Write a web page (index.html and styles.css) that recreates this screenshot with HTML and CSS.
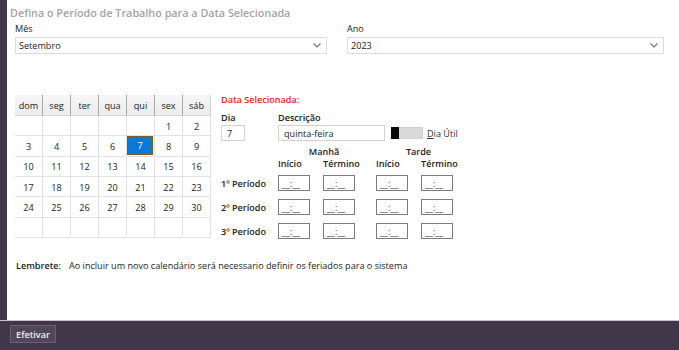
FILE: index.html
```html
<!DOCTYPE html>
<html lang="pt">
<head>
<meta charset="utf-8">
<link rel="stylesheet" href="styles.css">
</head>
<body>
<div class="app">
  <div class="panel">
    <h1 class="title">Defina o Período de Trabalho para a Data Selecionada</h1>
    <div class="selects">
      <div class="field">
        <div class="lbl">Mês</div>
        <div class="select"><span>Setembro</span><svg class="chev" width="8" height="5" viewBox="0 0 8 5"><polyline points="0.5,0.5 4,4 7.5,0.5" fill="none" stroke="#777" stroke-width="1.2"/></svg></div>
      </div>
      <div class="field">
        <div class="lbl">Ano</div>
        <div class="select"><span>2023</span><svg class="chev" width="8" height="5" viewBox="0 0 8 5"><polyline points="0.5,0.5 4,4 7.5,0.5" fill="none" stroke="#777" stroke-width="1.2"/></svg></div>
      </div>
    </div>
    <div class="content">
      <div class="calendar">
        <div class="hd">dom</div><div class="hd">seg</div><div class="hd">ter</div><div class="hd">qua</div><div class="hd">qui</div><div class="hd">sex</div><div class="hd">sáb</div>
        <div class="cd"></div><div class="cd"></div><div class="cd"></div><div class="cd"></div><div class="cd"></div><div class="cd">1</div><div class="cd">2</div>
        <div class="cd">3</div><div class="cd">4</div><div class="cd">5</div><div class="cd">6</div><div class="cd"><span class="sel">7</span></div><div class="cd">8</div><div class="cd">9</div>
        <div class="cd">10</div><div class="cd">11</div><div class="cd">12</div><div class="cd">13</div><div class="cd">14</div><div class="cd">15</div><div class="cd">16</div>
        <div class="cd">17</div><div class="cd">18</div><div class="cd">19</div><div class="cd">20</div><div class="cd">21</div><div class="cd">22</div><div class="cd">23</div>
        <div class="cd">24</div><div class="cd">25</div><div class="cd">26</div><div class="cd">27</div><div class="cd">28</div><div class="cd">29</div><div class="cd">30</div>
        <div class="cd"></div><div class="cd"></div><div class="cd"></div><div class="cd"></div><div class="cd"></div><div class="cd"></div><div class="cd"></div>
      </div>
      <div class="form">
        <div class="sel-title">Data Selecionada:</div>
        <div class="day-row">
          <div class="col-dia">
            <div class="flbl">Dia</div>
            <div class="input dia">7</div>
          </div>
          <div class="col-desc">
            <div class="flbl">Descrição</div>
            <div class="desc-line">
              <div class="input desc">quinta-feira</div>
              <div class="toggle"><span class="thumb"></span></div>
              <span class="util"><u>D</u>ia Útil</span>
            </div>
          </div>
        </div>
        <div class="periods">
          <div></div><div class="grp g1">Manhã</div><div class="grp g2">Tarde</div>
          <div></div><div class="flbl">Início</div><div class="flbl">Término</div><div class="flbl">Início</div><div class="flbl">Término</div>
          <div class="plbl">1º Período</div><div class="time">__:__</div><div class="time">__:__</div><div class="time">__:__</div><div class="time">__:__</div>
          <div class="plbl">2º Período</div><div class="time">__:__</div><div class="time">__:__</div><div class="time">__:__</div><div class="time">__:__</div>
          <div class="plbl">3º Período</div><div class="time">__:__</div><div class="time">__:__</div><div class="time">__:__</div><div class="time">__:__</div>
        </div>
      </div>
    </div>
    <div class="reminder"><b>Lembrete:</b><span>Ao incluir um novo calendário será necessario definir os feriados para o sistema</span></div>
  </div>
  <div class="footer"><button class="btn">Efetivar</button></div>
</div>
</body>
</html>
```
FILE: styles.css
```css
* { box-sizing: border-box; }
html, body { margin: 0; padding: 0; }
body {
  background: #41364a;
  font-family: "Open Sans", "Noto Sans", sans-serif;
  font-size: 9.1px;
  color: #222;
  width: 679px;
  height: 350px;
  overflow: hidden;
}
b { font-weight: 600; }
.app { display: flex; flex-direction: column; height: 350px; }
.panel {
  margin-left: 7px;
  height: 320px;
  background: #fff;
  padding: 5px 0 0 8px;
}
.title {
  margin: 0 0 0 -5px;
  font-size: 10.8px;
  line-height: 16px;
  font-weight: 600;
  color: #a3a3a3;
}
.selects {
  margin-top: 1px;
  display: grid;
  grid-template-columns: 312px 317px;
  column-gap: 20px;
}
.lbl { line-height: 14px; height: 15px; color: #222; }
.select {
  height: 17px;
  border: 1px solid #dcdcdc;
  display: flex;
  align-items: center;
  justify-content: space-between;
  padding: 0 5px 0 3px;
}
.chev { display: block; }
.content {
  margin-top: 41px;
  display: flex;
  align-items: flex-start;
}
.calendar {
  width: 196px;
  display: grid;
  grid-template-columns: repeat(7, 28px);
  grid-template-rows: 21px repeat(6, 20.33px);
}
.hd {
  background: linear-gradient(#f6f6f6, #ececec);
  border-right: 1px solid #a8a8a8;
  border-bottom: 1px solid #d4d4d4;
  display: flex;
  align-items: center;
  justify-content: center;
}
.hd:nth-child(7) { border-right: 1px solid #d0d0d0; }
.cd {
  border-right: 1px solid #e2e2e2;
  border-bottom: 1px solid #e2e2e2;
  display: flex;
  align-items: center;
  justify-content: center;
  padding-top: 1px;
}
.sel {
  width: 27px;
  height: 19px;
  margin-top: -1px;
  margin-right: 1px;
  background: #0a78d6;
  color: #fff;
  border: 1px dotted #7a5a2a;
  display: flex;
  align-items: center;
  justify-content: center;
}
.form { margin-left: 10px; margin-top: -1px; }
.sel-title { color: #f01b1b; font-weight: 600; line-height: 12px; }
.day-row { display: flex; margin-top: 6px; }
.col-dia { width: 57px; }
.flbl { font-weight: 600; line-height: 12px; }
.input {
  margin-top: 1px;
  height: 16px;
  border: 1px solid #d2d2d2;
  padding: 0 5px;
  display: flex;
  align-items: center;
}
.dia { width: 24px; }
.desc-line { display: flex; align-items: center; }
.desc { width: 107px; }
.toggle {
  margin: 1px 0 0 6px;
  width: 32px;
  height: 12px;
  background: #d9d9d9;
  border: 1px solid #cfcfcf;
  display: flex;
}
.thumb { width: 8px; height: 12px; margin: -1px 0 0 -1px; background: #0a0a0a; }
.util { margin-left: 4px; margin-top: 1px; color: #333; }
.periods {
  margin-top: 5px;
  display: grid;
  grid-template-columns: 57px 45px 53px 45px 45px;
  grid-template-rows: 12px 13px 24px 24px 24px;
}
.grp { font-weight: 600; line-height: 12px; text-align: center; }
.g1 { grid-column: 2 / 4; padding-right: 6px; }
.g2 { grid-column: 4 / 6; padding-right: 5px; }
.periods .time, .periods .plbl { margin-top: 4px; }
.plbl { font-weight: 600; height: 16px; display: flex; align-items: center; }
.time {
  width: 32px;
  height: 16px;
  border: 1px solid #7c7c7c;
  padding: 0 3px;
  display: flex;
  align-items: center;
  color: #333;
  font-size: 9px;
}
.reminder {
  margin: 16px 0 0 1px;
  line-height: 14px;
  display: flex;
}
.reminder b { flex: 0 0 53px; }
.footer {
  height: 30px;
  border-top: 1px solid #c7c2cb;
  padding: 4px 0 0 10px;
}
.btn {
  display: block;
  width: 46px;
  height: 18px;
  padding: 0;
  background: #52465a;
  border: 1px solid #6a6071;
  color: #f0eef2;
  font-family: "Open Sans", "Noto Sans", sans-serif;
  font-weight: 600;
  font-size: 9.1px;
}
```
